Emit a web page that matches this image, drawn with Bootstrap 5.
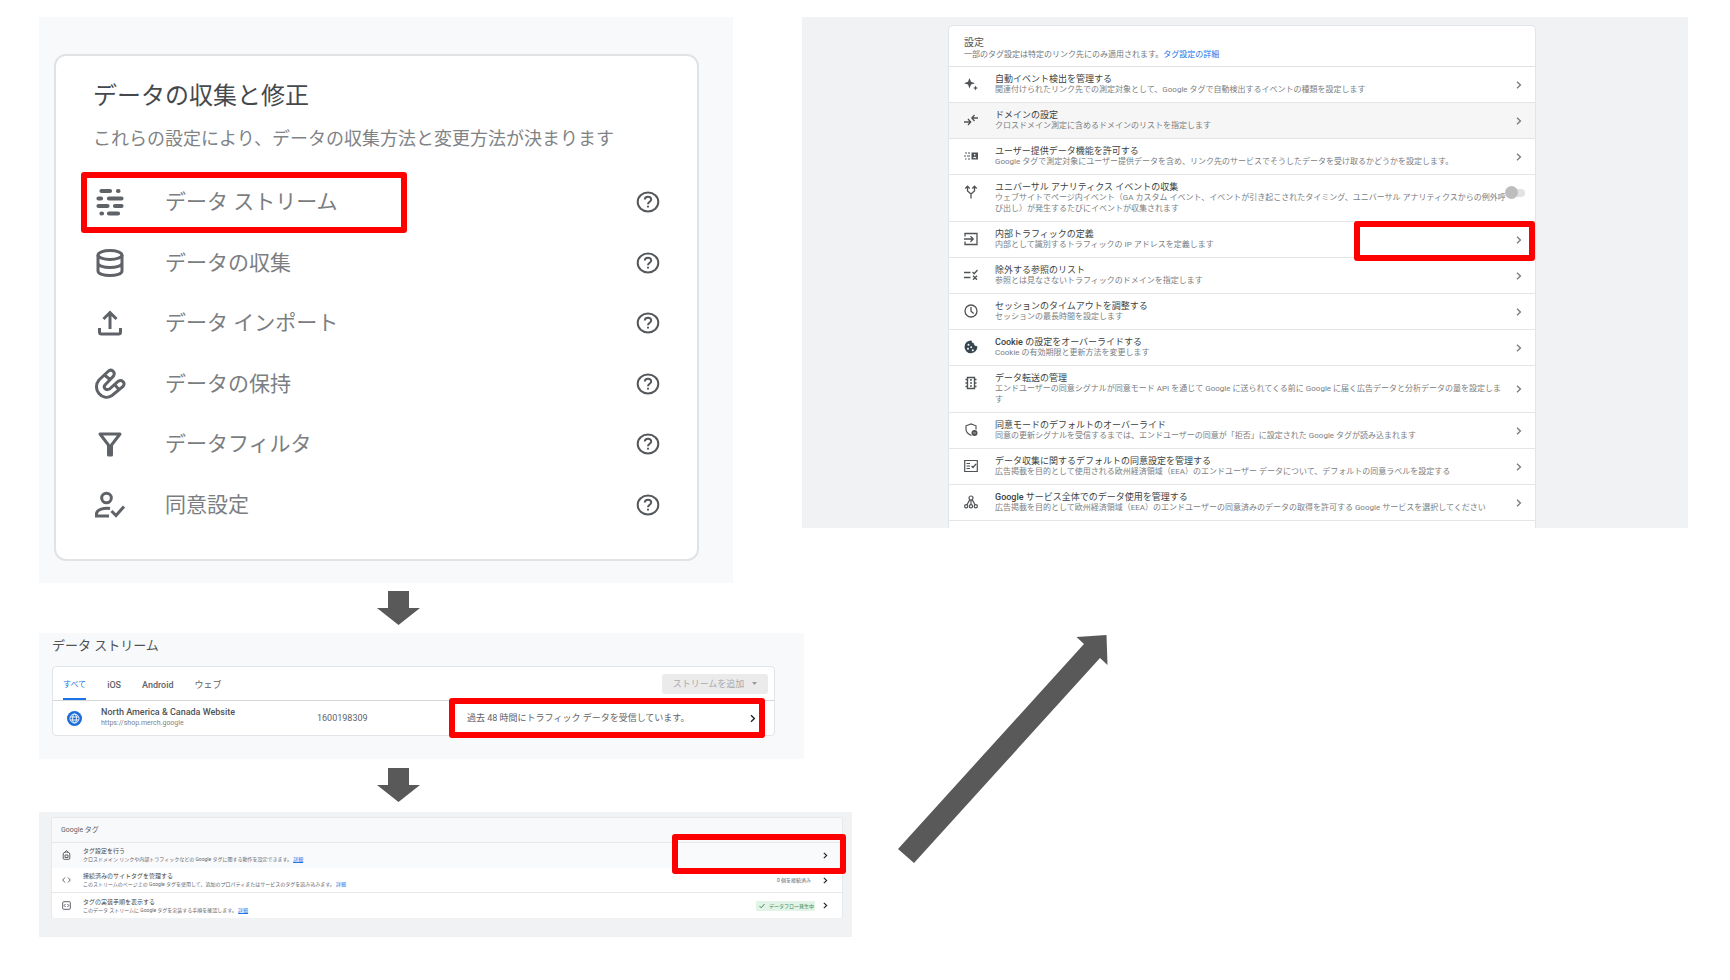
<!DOCTYPE html>
<html lang="ja">
<head>
<meta charset="utf-8">
<meta name="viewport" content="width=device-width, initial-scale=1">
<title>内部トラフィックの設定手順</title>
<link href="https://cdn.jsdelivr.net/npm/bootstrap@5.3.0/dist/css/bootstrap.min.css" rel="stylesheet">
<style>
body{font-family:Roboto,"Noto Sans CJK JP",sans-serif;color:#5f6368;background:#fff}
svg{display:block;flex:none}
a{color:#1a73e8}
.ico{fill:none;stroke:currentColor;stroke-width:2}
.board{display:grid;grid-template-columns:763fr 50fr 836fr;padding:17px 42px 0 39px}
.pane-a,.pane-b{background:#f8f9fb}
.pane-c,.pane-d{background:#f0f2f4}
.pane-a{grid-area:1/1;width:91%;padding:37px 34px 22px 15px}
.pane-d{grid-area:1/2/2/4;align-self:start;padding:8px 152px 0 146px}
.step-1{grid-area:2/1;padding:8px 0 8px 338px}
.pane-b{grid-area:3/1;margin-right:-2px;padding:4px 29px 23px 13px}
.step-2{grid-area:4/1;padding:9px 0 10px 338px}
.pane-c{grid-area:5/1/6/3;padding:5px 9px 19px 12px}
.step-3{grid-area:3/2/6/4;padding:2px 0 0 96px}
.hilite{position:absolute;border:6px solid #f00;border-radius:3px;pointer-events:none}

.box{background:#fff;border:1px solid #e1e4e8}
.collect{border:2px solid #e0e3e6;border-radius:12px;padding:22px 37px 24px 37px}
.collect h2{font-size:24px;line-height:36px;margin:0;color:#46494c;font-weight:400}
.collect p{font-size:18px;line-height:26px;margin:12px 0 20px;color:#808386}
.collect ul{display:grid;grid-auto-rows:1fr;min-height:363px;margin:0;padding:0;list-style:none}
.collect li{display:flex;align-items:center;font-size:21px;line-height:28px;color:#7b7e81}
.collect li .ico{width:34px;height:34px;margin-right:38px;color:#5f6368}
.hb{background:none;border:0;padding:0;margin-left:auto;color:#55585b}
.hilite-a{left:-12px;top:0;bottom:0;width:326px}

.pane-b h2{font-size:13px;line-height:18px;margin:0 0 11px;font-weight:400;color:#505356}
.streams{border-radius:4px;font-size:9px;line-height:12px}
.tabbar{height:34px;border-bottom:1px solid #d5d8db;padding:0 6px 0 10px;gap:21px}
.tabbar button{background:none;border:0;padding:4px 0 0;color:#5f6368;font-size:9px;border-bottom:2px solid transparent}
.tabbar .lat{font-weight:500}
.tabbar .on{color:#1a73e8;border-color:#1a73e8;font-size:8px}
.tabbar .add{background:#ebebeb;color:#aaa;border-radius:3px;width:106px;height:20px;align-self:center;padding:0;border:0}
.stream-row{height:34px;padding:0 18px 0 14px}
.stream-row .nm{width:216px;margin-left:19px}
.stream-row b{display:block;font-weight:500;line-height:11px;color:#505356}
.stream-row small{display:block;font-size:7px;line-height:11px;color:#808386}
.stream-row .id{width:150px}
.hilite-b{right:9px;width:316px;top:-3px;height:40px}

.tags{border-color:#e6e9ec;border-bottom:0;border-radius:3px}
.tags h2{font-size:7px;line-height:24px;height:25px;margin:0;padding-left:9px;background:#f8f9fb;border-bottom:1px solid #e6e8ea;font-weight:400}
.tag-row{height:25px;padding:0 14px 0 10px;border-bottom:1px solid #e6e8ea;font-size:5px;line-height:8px}
.tag-row strong{display:block;font-size:6px;line-height:8px;font-weight:400;color:#44474a}
.tag-row .txt{margin-left:12px}
.tag-row.sel{background:#f9fafc;border-color:transparent}
.tag-row:last-child{border:0}
.flow{background:#e2f3e7;color:#3d8b57;height:10px;padding:0 1px 0 3px}
.hilite-c{right:-4px;top:-9px;width:174px;height:40px}

.config{border-bottom:0;border-radius:5px 5px 0 0;padding-bottom:7px}
.config header{height:41px;border-bottom:1px solid #e0e2e4;padding:10px 15px 0;font-size:8px;line-height:11px;color:#75787b}
.config header h2{font-size:10px;line-height:13px;margin:0;font-weight:400;color:#505356}
.config a{text-decoration:none}
.crow{border-bottom:1px solid #e3e5e7;padding:7px 13px 7px 15px;line-height:11px;font-size:8px;color:#7b7e81}
.crow .ico,.crow .solid{width:14px;height:14px;margin:3px 17px 0 0;color:#505356}
.crow h3{font-size:9px;line-height:10px;margin:0;font-weight:400;color:#3c3f42}
.crow h3 span{font-weight:500}
.crow .chev{margin-left:auto}
.crow .tx{white-space:nowrap}
.crow.sel{background:#f6f6f6}
.hilite-d{right:0;top:-1px;width:181px;height:40px}
.crow .sw{appearance:none;width:22px;height:8px;border-radius:4px;background:#e2e2e2;border:0;margin:7px -3px 0 auto;position:relative}
.crow .sw::before{content:"";position:absolute;left:-1px;top:-3px;width:13px;height:13px;border-radius:50%;background:#bdbdbd}
</style>
</head>
<body>
<svg width="0" height="0" class="position-absolute" aria-hidden="true">
<defs>
<symbol id="help" viewBox="0 0 24 22"><g fill="none" stroke="currentColor" stroke-width="2"><ellipse cx="12" cy="11" rx="10.3" ry="9.4"/><path d="M8.800 8.600C8.800 4.800 15.200 4.800 15.200 8.400C15.200 10.600 12 10.800 12 13.200M12 14.800V16.600"/></g></symbol>
<symbol id="chev" viewBox="0 0 6 8"><path d="M1 .8L4.400 4L1 7.200" fill="none" stroke="currentColor" stroke-width="1.4"/></symbol>
<symbol id="down" viewBox="0 0 43 34"><path d="M11 0H32V17H43L21.500 34L0 17H11Z" fill="#595959"/></symbol>
</defs>
</svg>
<main class="board">
<section class="pane-a">
 <div class="box collect">
  <h2>データの収集と修正</h2>
  <p>これらの設定により、データの収集方法と変更方法が決まります</p>
  <ul>
   <li class="position-relative"><svg class="ico" viewBox="0 0 34 34"><path stroke-width="4.200" stroke-linecap="round" d="M8.500 6H17M25 6H25.500M5.500 13.500H8M16 13.500H28.500M5.500 21H14.500M22 21H28.500M8.500 28.500H9M16 28.500H25"/></svg>データ ストリーム<button class="hb" aria-label="ヘルプ"><svg width="24" height="22"><use href="#help"/></svg></button><span class="hilite hilite-a"></span></li>
   <li><svg class="ico" viewBox="0 0 34 34" style="stroke-width:3"><ellipse cx="17" cy="9" rx="12" ry="4.500"/><path d="M5 9V25C5 31 29 31 29 25V9M5 17C5 23 29 23 29 17"/></svg>データの収集<button class="hb" aria-label="ヘルプ"><svg width="24" height="22"><use href="#help"/></svg></button></li>
   <li><svg class="ico" viewBox="0 0 34 34" style="stroke-width:3"><path d="M17 23V7M10.500 13L17 6.500L23.500 13M6.500 22V26Q6.500 28 8.500 28H25.500Q27.500 28 27.500 26V22"/></svg>データ インポート<button class="hb" aria-label="ヘルプ"><svg width="24" height="22"><use href="#help"/></svg></button></li>
   <li><svg class="ico" viewBox="0 0 34 34" style="stroke-width:3"><path d="M15 4.500L6 13C-1.500 22 9 35 19 28.500L30 19.500C33 15.500 28.500 12 25 14.500L16.500 22C12.500 24 9.500 20 12.500 17.500L20.500 9C23 4.500 18 1.500 15 4.500ZM11.500 8L17 12.500M21.500 17.500L26 22.500"/></svg>データの保持<button class="hb" aria-label="ヘルプ"><svg width="24" height="22"><use href="#help"/></svg></button></li>
   <li><svg class="ico" viewBox="0 0 34 34" style="stroke-width:3"><path d="M7 7H27L18.500 18V28H15.500V18Z" stroke-linejoin="round"/></svg>データフィルタ<button class="hb" aria-label="ヘルプ"><svg width="24" height="22"><use href="#help"/></svg></button></li>
   <li><svg class="ico" viewBox="0 0 34 34" style="stroke-width:3"><circle cx="13.500" cy="10" r="4.800"/><path d="M16 28H3.500V25.500C4 21.500 11 19.500 17 20.500M18.500 23L23 27.500L31 18.500"/></svg>同意設定<button class="hb" aria-label="ヘルプ"><svg width="24" height="22"><use href="#help"/></svg></button></li>
  </ul>
 </div>
</section>

<div class="step-1"><svg width="43" height="34"><use href="#down"/></svg></div>

<section class="pane-b">
 <h2>データ ストリーム</h2>
 <div class="box streams">
  <div class="tabbar d-flex">
   <button class="on">すべて</button><button class="lat">iOS</button><button class="lat">Android</button><button>ウェブ</button>
   <button class="add ms-auto d-flex align-items-center justify-content-center gap-2" disabled>ストリームを追加 <svg width="5" height="3"><path d="M0 0H5L2.500 3Z" fill="#999"/></svg></button>
  </div>
  <div class="stream-row d-flex align-items-center position-relative">
   <svg width="15" height="15" viewBox="0 0 15 15"><circle cx="7.500" cy="7.500" r="7.500" fill="#1a6dd8"/><g fill="none" stroke="#fff" stroke-width=".9"><circle cx="7.500" cy="7.500" r="4.500"/><ellipse cx="7.500" cy="7.500" rx="2" ry="4.500"/><path d="M3.500 6H11.500M3.500 9H11.500"/></g></svg>
   <div class="nm"><b>North America &amp; Canada Website</b><small>https://shop.merch.google</small></div>
   <span class="id">1600198309</span>
   <span>過去 48 時間にトラフィック データを受信しています。</span>
   <svg class="ms-auto text-dark" width="6" height="9"><use href="#chev"/></svg>
   <span class="hilite hilite-b"></span>
  </div>
 </div>
</section>

<div class="step-2"><svg width="43" height="34"><use href="#down"/></svg></div>

<section class="pane-c">
 <div class="box tags">
  <h2>Google タグ</h2>
  <div class="tag-row sel d-flex align-items-center position-relative">
   <svg class="ico" width="9" height="10" viewBox="0 0 9 10" style="stroke-width:1"><path d="M2 9.300H7Q7.800 9.300 7.800 8V4Q7.800 2 4.500 2Q1.200 2 1.200 4V8Q1.200 9.300 2 9.300ZM3 2Q4.500-1 6 2M3 5H6V7.500H3Z"/></svg>
   <div class="txt"><strong>タグ設定を行う</strong>クロスドメイン リンクや内部トラフィックなどの Google タグに関する動作を設定できます。 <a href="#">詳細</a></div>
   <svg class="ms-auto text-dark" width="5" height="7"><use href="#chev"/></svg>
   <span class="hilite hilite-c"></span>
  </div>
  <div class="tag-row d-flex align-items-center">
   <svg class="ico" width="9" height="8" viewBox="0 0 9 8" style="stroke-width:1"><path d="M3 1.500L.7 4L3 6.500M6 1.500L8.300 4L6 6.500"/></svg>
   <div class="txt"><strong>接続済みのサイトタグを管理する</strong>このストリームのページ上の Google タグを使用して、追加のプロパティまたはサービスのタグを読み込みます。 <a href="#" class="text-decoration-none">詳細</a></div>
   <span class="ms-auto me-2 pe-1">0 個を接続済み</span>
   <svg class="text-dark" width="5" height="7"><use href="#chev"/></svg>
  </div>
  <div class="tag-row d-flex align-items-center">
   <svg class="ico" width="9" height="9" viewBox="0 0 9 9" style="stroke-width:1"><rect x=".7" y=".7" width="7.600" height="7.600" rx="1"/><path d="M3.500 3L2.200 4.500L3.500 6M5.500 3L6.800 4.500L5.500 6"/></svg>
   <div class="txt"><strong>タグの実装手順を表示する</strong>このデータ ストリームに Google タグを実装する手順を確認します。 <a href="#">詳細</a></div>
   <span class="flow ms-auto me-2 d-flex align-items-center gap-1"><svg width="6" height="6" viewBox="0 0 6 6"><path d="M.5 3L2.200 4.800L5.500 1" fill="none" stroke="currentColor"/></svg>データフロー発生中</span>
   <svg class="text-dark" width="5" height="7"><use href="#chev"/></svg>
  </div>
 </div>
</section>

<section class="pane-d">
 <div class="box config">
  <header><h2>設定</h2>一部のタグ設定は特定のリンク先にのみ適用されます。<a href="#">タグ設定の詳細</a></header>
  <div class="crow d-flex"><svg class="solid" viewBox="0 0 14 14" fill="currentColor"><path d="M5.500 1L7 4.800L11 6.200L7 7.600L5.500 11.500L4 7.600L0 6.200L4 4.800ZM11.500 8.500L12.200 10.300L14 11L12.200 11.700L11.500 13.500L10.800 11.700L9 11L10.800 10.300Z"/></svg><div class="tx"><h3>自動イベント検出を管理する</h3>関連付けられたリンク先での測定対象として、Google タグで自動検出するイベントの種類を設定します</div><svg class="chev align-self-center" width="6" height="8"><use href="#chev"/></svg></div>
  <div class="crow sel d-flex"><svg class="ico" viewBox="0 0 14 14" style="stroke-width:1.300"><path d="M0 9H6.500M4 6L6.700 9L4 12M14 5H8M10.500 2L7.800 5L10.500 8"/></svg><div class="tx"><h3>ドメインの設定</h3>クロスドメイン測定に含めるドメインのリストを指定します</div><svg class="chev align-self-center" width="6" height="8"><use href="#chev"/></svg></div>
  <div class="crow d-flex"><svg class="ico" viewBox="0 0 14 14" style="stroke-width:1.200"><path d="M1 4H3M4 4H6M0 7H2M3 7H6M1 10H2.500M4 10H6"/><rect x="7.500" y="3.500" width="6.500" height="7" fill="currentColor" stroke="none"/><path d="M9.500 9Q10.700 7.500 12 9M10.700 5V6.500" stroke="#fff"/></svg><div class="tx"><h3>ユーザー提供データ機能を許可する</h3>Google タグで測定対象にユーザー提供データを含め、リンク先のサービスでそうしたデータを受け取るかどうかを設定します。</div><svg class="chev align-self-center" width="6" height="8"><use href="#chev"/></svg></div>
  <div class="crow d-flex"><svg class="ico" viewBox="0 0 14 14" style="stroke-width:1.300"><path d="M7 13.500V9L3.500 6V1.500M7 9L10.500 6V1.500M1.300 3.500L3.500 1.200L5.700 3.500M8.300 3.500L10.500 1.200L12.700 3.500"/></svg><div class="tx"><h3>ユニバーサル アナリティクス イベントの収集</h3>ウェブサイトでページ内イベント（GA カスタム イベント、イベントが引き起こされたタイミング、ユニバーサル アナリティクスからの例外呼<br>び出し）が発生するたびにイベントが収集されます</div><input class="sw" type="checkbox" role="switch" aria-label="ユニバーサル アナリティクス イベントの収集"></div>
  <div class="crow d-flex position-relative"><svg class="ico" viewBox="0 0 14 14" style="stroke-width:1.300"><path d="M1 4.500V1.500H13V12.500H1V9.500M0 7H9M6.500 4.300L9.200 7L6.500 9.700"/></svg><div class="tx"><h3>内部トラフィックの定義</h3>内部として識別するトラフィックの IP アドレスを定義します</div><svg class="chev align-self-center" width="6" height="8"><use href="#chev"/></svg><span class="hilite hilite-d"></span></div>
  <div class="crow d-flex"><svg class="ico" viewBox="0 0 14 14" style="stroke-width:1.300"><path d="M0 4.500H6.500M0 9.500H6.500M8.500 4L10.200 5.700L13.500 2M9 7.800L13 11.800M13 7.800L9 11.800"/></svg><div class="tx"><h3>除外する参照のリスト</h3>参照とは見なさないトラフィックのドメインを指定します</div><svg class="chev align-self-center" width="6" height="8"><use href="#chev"/></svg></div>
  <div class="crow d-flex"><svg class="ico" viewBox="0 0 14 14" style="stroke-width:1.300"><circle cx="7" cy="7" r="6"/><path d="M7 3V7.200L9.700 9.500"/></svg><div class="tx"><h3>セッションのタイムアウトを調整する</h3>セッションの最長時間を設定します</div><svg class="chev align-self-center" width="6" height="8"><use href="#chev"/></svg></div>
  <div class="crow d-flex"><svg class="solid" viewBox="0 0 14 14"><path d="M7.500 .5Q7.500 3 9.800 3.200Q10 6 13.300 6.200A6.400 6.400 0 1 1 7.500 .5Z" fill="#37474f"/><g fill="#fff"><circle cx="4.500" cy="4.800" r="1"/><circle cx="7.200" cy="7.200" r=".9"/><circle cx="4" cy="8.800" r="1"/><circle cx="8.800" cy="10.200" r="1"/></g></svg><div class="tx"><h3><span>Cookie</span> の設定をオーバーライドする</h3>Cookie の有効期限と更新方法を変更します</div><svg class="chev align-self-center" width="6" height="8"><use href="#chev"/></svg></div>
  <div class="crow d-flex"><svg class="ico" viewBox="0 0 14 14" style="stroke-width:1.400"><path d="M3.500 1.500H10.500V12.500H3.500ZM1.500 3.500H3.500M1.500 7H3.500M1.500 10.500H3.500M10.500 3.500H12.500M10.500 7H12.500M10.500 10.500H12.500M7 3V5M7 6V8M7 9V11"/></svg><div class="tx"><h3>データ転送の管理</h3>エンドユーザーの同意シグナルが同意モード API を通じて Google に送られてくる前に Google に届く広告データと分析データの量を設定しま<br>す</div><svg class="chev align-self-center" width="6" height="8"><use href="#chev"/></svg></div>
  <div class="crow d-flex"><svg class="ico" viewBox="0 0 14 14" style="stroke-width:1.200"><path d="M7.500 12.500C3.500 11 2 8.500 2 6V2.800L7 1L12 2.800V6.500"/><circle cx="10.500" cy="10" r="3" fill="currentColor" stroke="none"/><path d="M9 10H12" stroke="#ccc" stroke-width=".7"/></svg><div class="tx"><h3>同意モードのデフォルトのオーバーライド</h3>同意の更新シグナルを受信するまでは、エンドユーザーの同意が「拒否」に設定された Google タグが読み込まれます</div><svg class="chev align-self-center" width="6" height="8"><use href="#chev"/></svg></div>
  <div class="crow d-flex"><svg class="ico" viewBox="0 0 14 14" style="stroke-width:1.200"><path d="M.7 1.500H13.300V12.500H.7ZM2.500 4.500H6M2.500 7H6M2.500 9.500H6M7.500 7L9 8.500L12 5"/></svg><div class="tx"><h3>データ収集に関するデフォルトの同意設定を管理する</h3>広告掲載を目的として使用される欧州経済領域（EEA）のエンドユーザー データについて、デフォルトの同意ラベルを設定する</div><svg class="chev align-self-center" width="6" height="8"><use href="#chev"/></svg></div>
  <div class="crow d-flex"><svg class="ico" viewBox="0 0 14 14" style="stroke-width:1.200"><circle cx="7" cy="3" r="2"/><circle cx="2.200" cy="11.200" r="1.600"/><circle cx="7" cy="11.200" r="1.600"/><circle cx="11.800" cy="11.200" r="1.600"/><path d="M7 5V9.600M5.800 4.600L3 9.800M8.200 4.600L11 9.800"/></svg><div class="tx"><h3><span>Google</span> サービス全体でのデータ使用を管理する</h3>広告掲載を目的として欧州経済領域（EEA）のエンドユーザーの同意済みのデータの取得を許可する Google サービスを選択してください</div><svg class="chev align-self-center" width="6" height="8"><use href="#chev"/></svg></div>
 </div>
</section>

<div class="step-3"><svg width="212" height="232" viewBox="0 0 212 232"><path d="M208.500 0L209.500 30L202 23L16 228L0 214L186 9L178.500 2Z" fill="#595959"/></svg></div>
</main>
<script src="https://cdn.jsdelivr.net/npm/bootstrap@5.3.0/dist/js/bootstrap.bundle.min.js"></script>
</body>
</html>
